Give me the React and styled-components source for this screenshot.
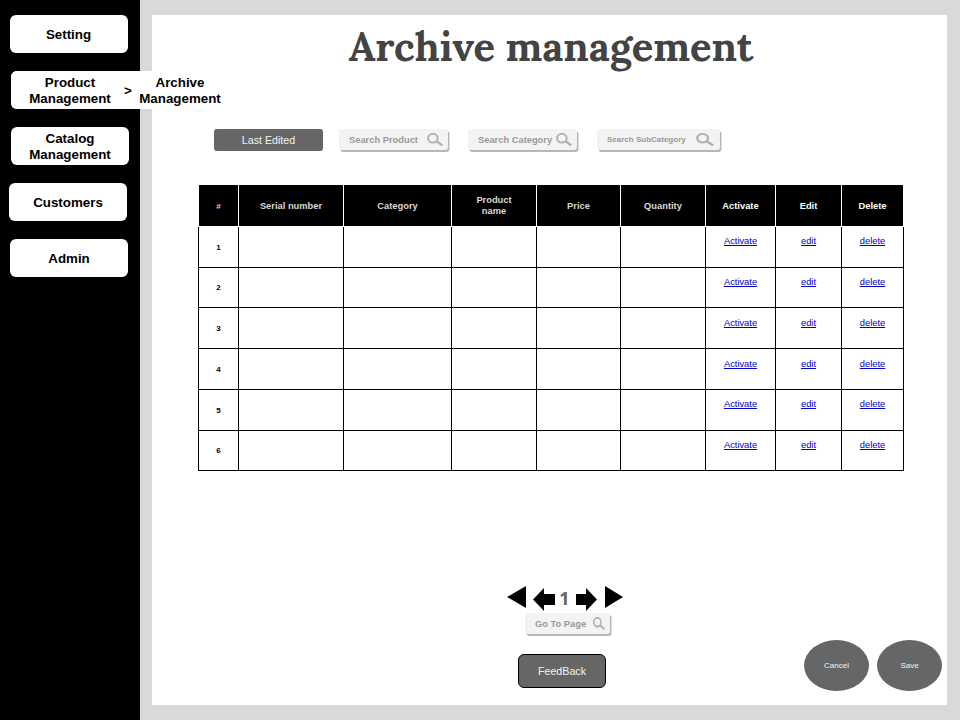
import React from 'react';
import styled, { createGlobalStyle } from 'styled-components';

const GlobalStyle = createGlobalStyle`
  * { box-sizing: border-box; }
  body {
    margin: 0;
    background: #d9d9d9;
    font-family: "Liberation Sans", Arial, sans-serif;
  }
  button { font-family: inherit; border: 0; padding: 0; }
`;

const Page = styled.div`
  display: flex;
  width: 960px;
  height: 720px;
  overflow: hidden;
`;

const Sidebar = styled.nav`
  position: relative;
  z-index: 1;
  width: 140px;
  flex: none;
  padding-top: 15px;
  display: flex;
  flex-direction: column;
  align-items: flex-start;
  gap: 18px;
  background: #000;
`;

const NavButton = styled.button`
  flex: none;
  width: 118px;
  height: 38px;
  margin-left: ${(p) => p.$inset}px;
  padding-top: 1px;
  padding-right: ${(p) => p.$nudge || 0}px;
  border-radius: 6px;
  background: ${(p) => (p.$clear ? 'transparent' : '#fff')};
  color: #000;
  font-size: 13.33px;
  font-weight: bold;
  line-height: 16px;
`;

const NavTrail = styled.div`
  display: flex;
  align-items: center;
  width: 229px;
  height: 38px;
  margin-left: 11px;
  border-radius: 6px;
  background: #fff;
  font-size: 13.33px;
  font-weight: bold;
`;

const TrailArrow = styled.span`
  width: 8px;
  margin-left: -5px;
  margin-right: -2px;
`;

const Panel = styled.main`
  display: flex;
  flex-direction: column;
  width: 795px;
  height: 690px;
  margin: 15px 0 0 12px;
  background: #fff;
`;

const Title = styled.h1`
  height: 64px;
  margin: 0 0 0 1px;
  padding-left: 2px;
  text-align: center;
  white-space: nowrap;
  color: #434343;
  font: bold 40px/64px Lora, "Liberation Serif", serif;
`;

const Toolbar = styled.div`
  display: flex;
  height: 24px;
  margin: 49px 0 0 62px;
  padding-top: 1px;
`;

const FilterButton = styled.button`
  width: 109px;
  height: 22px;
  margin-right: 16px;
  border-radius: 3px;
  background: #666;
  color: #f3f3f3;
  font-size: 10.67px;
`;

const SearchBox = styled.label`
  display: flex;
  align-items: center;
  justify-content: space-between;
  flex: none;
  width: ${(p) => p.$width}px;
  height: 21px;
  margin-right: ${(p) => p.$gap || 0}px;
  padding: 0 ${(p) => p.$end || 5}px 0 ${(p) => p.$start || 10}px;
  border-radius: 3px;
  background: #f3f3f3;
  box-shadow: 1.5px 2px 0 #b7b7b7;
  color: #999;
  font-size: ${(p) => p.$font}px;
  font-weight: bold;
  white-space: nowrap;
`;

const Glass = styled.svg`
  display: block;
  flex: none;
`;

const Table = styled.div`
  width: 706px;
  margin: 33px 0 0 46px;
`;

const Row = styled.div`
  display: grid;
  grid-template-columns: 40px 105px 108px 85px 84px 85px 70px 66px 62px;
  height: ${(p) => p.$height}px;
  border-left: 1px solid #000;
`;

const HeadRow = styled(Row)`
  border-left-color: #fff;
  border-bottom: 1px solid #fff;
`;

const HeadCell = styled.div`
  display: flex;
  align-items: center;
  justify-content: center;
  padding-top: 1px;
  border-right: 1px solid #fff;
  background: #000;
  color: ${(p) => (p.$bright ? '#fff' : '#d9d9d9')};
  font-size: ${(p) => (p.$small ? 8 : 9.33)}px;
  font-weight: bold;
  line-height: 11px;
  text-align: center;
`;

const Cell = styled.div`
  display: flex;
  justify-content: center;
  border-right: 1px solid #000;
  border-bottom: 1px solid #000;
`;

const RowNumber = styled.span`
  padding-top: ${(p) => (p.$high ? 15 : 16)}px;
  font-size: 8px;
  font-weight: bold;
  line-height: 9px;
`;

const RowLink = styled.a`
  padding-top: ${(p) => (p.$low ? 10 : 9)}px;
  color: #0000c8;
  font-size: 9.33px;
  line-height: 11px;
  text-decoration: underline;
`;

const Footer = styled.footer`
  display: flex;
  flex-direction: column;
  align-items: flex-start;
  margin: 115px 0 0 355px;
`;

const Pager = styled.div`
  display: flex;
  height: 26px;
`;

const PagerIcon = styled.svg`
  display: block;
  flex: none;
  margin-top: ${(p) => p.$top || 0}px;
  margin-right: ${(p) => p.$gap || 0}px;
`;

const PageNumber = styled.span`
  width: 21px;
  text-align: center;
  color: #666;
  font: bold 18px/25px "Open Sans", sans-serif;
  padding-right: 2px;
`;

const GoTo = styled.div`
  margin: 1px 0 0 18px;
`;

const Actions = styled.div`
  display: flex;
  margin: 6px 0 0 11px;
`;

const FeedbackButton = styled.button`
  width: 88px;
  height: 34px;
  margin-top: 14px;
  border: 1px solid #000;
  border-radius: 6px;
  background: #666;
  color: #f3f3f3;
  font-size: 10.67px;
`;

const OvalButton = styled.button`
  width: 65px;
  height: 51px;
  margin-left: ${(p) => p.$gap}px;
  border-radius: 50%;
  background: #666;
  color: #f3f3f3;
  font-size: 8px;
`;

function SearchGlass({ width, height }) {
  return (
    <Glass width={width} height={height} viewBox="0 0 15 13" preserveAspectRatio="none" fill="none" stroke="#b0b0b0">
      <ellipse cx="5.5" cy="5.2" rx="4.5" ry="4.3" strokeWidth="1.9" />
      <path d="M8.8 8.2L14.3 12.4" strokeWidth="2.2" />
    </Glass>
  );
}

const headings = [
  ['#', 'small'], ['Serial number'], ['Category'], ['Product name'], ['Price'],
  ['Quantity'], ['Activate', 'bright'], ['Edit', 'bright'], ['Delete', 'bright'],
];
const rowHeights = [41, 40, 41, 41, 41, 40];
const blanks = ['serial', 'category', 'name', 'price', 'quantity'];
const links = ['Activate', 'edit', 'delete'];

export default function App() {
  return (
    <Page>
      <GlobalStyle />
      <Sidebar>
        <NavButton $inset={10} $nudge={1}>Setting</NavButton>
        <NavTrail>
          <NavButton $inset={0}>Product<br />Management</NavButton>
          <TrailArrow>&gt;</TrailArrow>
          <NavButton $inset={-9} $clear>Archive<br />Management</NavButton>
        </NavTrail>
        <NavButton $inset={11}>Catalog<br />Management</NavButton>
        <NavButton $inset={9}>Customers</NavButton>
        <NavButton $inset={10}>Admin</NavButton>
      </Sidebar>
      <Panel>
        <Title>Archive management</Title>
        <Toolbar>
          <FilterButton>Last Edited</FilterButton>
          <SearchBox $width={109} $font={9.33} $gap={20}>
            Search Product<SearchGlass width={16} height={13} />
          </SearchBox>
          <SearchBox $width={109} $font={9.33} $gap={20}>
            Search Category<SearchGlass width={16} height={13} />
          </SearchBox>
          <SearchBox $width={123} $font={8} $end={6}>
            Search SubCategory<SearchGlass width={18} height={13} />
          </SearchBox>
        </Toolbar>
        <Table>
          <HeadRow $height={42}>
            {headings.map(([label, tone]) => (
              <HeadCell key={label} $small={tone === 'small'} $bright={tone === 'bright'}>
                {label === 'Product name' ? <span>Product<br />name</span> : label}
              </HeadCell>
            ))}
          </HeadRow>
          {rowHeights.map((height, i) => (
            <Row key={i} $height={height}>
              <Cell><RowNumber $high={i === 1 || i === 5}>{i + 1}</RowNumber></Cell>
              {blanks.map((name) => <Cell key={name} />)}
              {links.map((label) => (
                <Cell key={label}><RowLink href="#" $low={i === 2 || i === 3}>{label}</RowLink></Cell>
              ))}
            </Row>
          ))}
        </Table>
        <Footer>
          <Pager>
            <PagerIcon width="19" height="22" $gap={7}><path d="M0 11L19 0V22Z" /></PagerIcon>
            <PagerIcon width="22" height="23" $top={2}><path d="M0 11.5L11 0V6H22V17H11V23Z" /></PagerIcon>
            <PageNumber>1</PageNumber>
            <PagerIcon width="21" height="23" $top={2} $gap={8}><path d="M21 11.5L10 0V6H0V17H10V23Z" /></PagerIcon>
            <PagerIcon width="18" height="22"><path d="M18 11L0 0V22Z" /></PagerIcon>
          </Pager>
          <GoTo>
            <SearchBox $width={85} $font={9.33}>
              Go To Page<SearchGlass width={12} height={13} />
            </SearchBox>
          </GoTo>
          <Actions>
            <FeedbackButton>FeedBack</FeedbackButton>
            <OvalButton $gap={198}>Cancel</OvalButton>
            <OvalButton $gap={8}>Save</OvalButton>
          </Actions>
        </Footer>
      </Panel>
    </Page>
  );
}
